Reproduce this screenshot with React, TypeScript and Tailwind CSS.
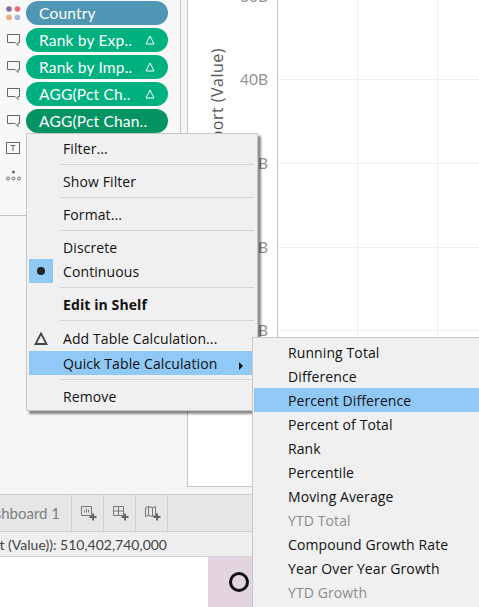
import React from "react";

const F = "[font-family:'Open_Sans',sans-serif]";

function Bubble() {
  return (
    <svg width="15" height="14" viewBox="0 0 15 14" fill="none" stroke="#666" strokeWidth="1">
      <path d="M1.500 1.500h12v8h-1.500v3l-3-3h-7.500z" />
    </svg>
  );
}

function Pill({ text, delta, dark, blue }: { text: string; delta?: boolean; dark?: boolean; blue?: boolean }) {
  const bg = blue ? "bg-[#4f96b4]" : dark ? "bg-[#049464]" : "bg-[#00b180]";
  return (
    <div className={`${bg} h-[24px] w-[142px] rounded-full flex items-center pl-[13px] pr-[13px] pt-px text-white text-[15.5px] justify-between tracking-[0.2px] [font-family:'Lato',sans-serif]`}>
      <span className="whitespace-nowrap">{text}</span>
      {delta && (
        <svg width="10" height="10" viewBox="0 0 10 10" fill="none" stroke="#fff" strokeWidth="1" className="-mt-px">
          <path d="M5 1L9 9H1z" />
        </svg>
      )}
    </div>
  );
}

function ShelfRow({ icon, children }: { icon: React.ReactNode; children?: React.ReactNode }) {
  return (
    <div className="h-[24px] flex items-center">
      <div className="w-[26px] flex items-center justify-center">{icon}</div>
      {children}
    </div>
  );
}

function Sep() {
  return <div className="h-px bg-[#d4d4d4] my-1 ml-[33px] mr-[3px]" />;
}

function Item({ children, bold, active, check, h }: { children: React.ReactNode; bold?: boolean; active?: boolean; check?: React.ReactNode; h?: string }) {
  return (
    <div className={`${h ?? "h-[24px]"} flex items-center mx-[2px] tracking-[0.1px] ${active ? "bg-[#90c8f6]" : ""} ${bold ? "font-bold" : ""}`}>
      <div className="w-[24px] h-[24px] flex items-center justify-center shrink-0">{check}</div>
      <span className="ml-[10px] whitespace-nowrap">{children}</span>
    </div>
  );
}

function SubItem({ children, active, off }: { children: React.ReactNode; active?: boolean; off?: boolean }) {
  return (
    <div className={`h-[24px] flex items-center pl-[34px] ml-px whitespace-nowrap tracking-[0.1px] ${active ? "bg-[#90c8f6]" : ""} ${off ? "text-[#8c8c8c]" : "text-[#111]"}`}>
      {children}
    </div>
  );
}

function TabIcon({ kind }: { kind: number }) {
  return (
    <div className="w-[32px] h-full border-r border-[#cfcfcf] flex items-center justify-center pl-[3px]">
      <svg width="18" height="18" viewBox="0 0 18 18" fill="none" stroke="#777" strokeWidth="1">
        {kind === 0 && <path d="M1.500 2.500h10v9h-10zM4.500 8.500v-2M6.500 8.500v-4M8.500 8.500v-3" />}
        {kind === 1 && <path d="M1.500 2.500h10v9h-10zM6.500 2.500v9M1.500 7h10" />}
        {kind === 2 && <path d="M1.500 3.500l3-1 4 1 3-1v9l-3 1-4-1-3 1zM4.500 2.500v9M8.500 3.500v9" />}
        <path d="M13 9.500v7M9.500 13h7" stroke="#666" strokeWidth="2" />
      </svg>
    </div>
  );
}

export default function App() {
  return (
    <div className={`relative w-[479px] h-[607px] overflow-hidden bg-[#f5f5f5] flex flex-col ${F}`}>
      <div className="flex h-[494px] shrink-0">
        <div className="w-[181px] shrink-0 border-r border-[#c4c4c4] bg-[#f8f8f8] h-[215px] flex flex-col pt-px gap-[3px]">
          <ShelfRow
            icon={
              <svg width="15" height="15" viewBox="0 0 15 15">
                <circle cx="3" cy="3" r="2.800" fill="#8a6d9c" />
                <circle cx="11.500" cy="3" r="2.800" fill="#ee6a72" />
                <circle cx="3" cy="11.500" r="2.800" fill="#f3a77c" />
                <circle cx="11.500" cy="11.500" r="2.800" fill="#a3b7d8" />
              </svg>
            }
          >
            <Pill text="Country" blue />
          </ShelfRow>
          <ShelfRow icon={<Bubble />}><Pill text="Rank by Exp.." delta /></ShelfRow>
          <ShelfRow icon={<Bubble />}><Pill text="Rank by Imp.." delta /></ShelfRow>
          <ShelfRow icon={<Bubble />}><Pill text="AGG(Pct Ch.." delta /></ShelfRow>
          <ShelfRow icon={<Bubble />}><Pill text="AGG(Pct Chan.." dark /></ShelfRow>
          <ShelfRow
            icon={
              <svg width="14" height="14" viewBox="0 0 14 14" fill="none" stroke="#666">
                <path d="M.5 1.500h13v11H.5z" />
                <path d="M4.500 4.500h5M7 4.500v5.500" />
              </svg>
            }
          />
          <ShelfRow
            icon={
              <svg width="15" height="11" viewBox="0 0 15 11" fill="none" stroke="#666">
                <circle cx="7.500" cy="2" r="1.500" fill="#666" stroke="none" />
                <circle cx="2" cy="8.500" r="1.500" />
                <circle cx="7.500" cy="8.500" r="1.500" />
                <circle cx="13" cy="8.500" r="1.500" />
              </svg>
            }
          />
          <div className="mt-auto h-px w-[26px] bg-[#c4c4c4] translate-y-px" />
        </div>
        <div className="flex-1 ml-[6px] h-[487px] bg-white border-l border-b border-[#c4c4c4]">
          <svg width="291" height="486" className="block">
            <g stroke="#efefef" fill="none">
              <path d="M89 79.500H291M89 163.500H291M89 247.500H291M89 330.500H291M169.500 0V486M249.500 0V486" />
            </g>
            <path d="M89.500 0V486" stroke="#c4c4c4" fill="none" />
            <g fill="#929292" fontSize="15.500" textAnchor="end" fontFamily="Lato, sans-serif">
              <text x="80" y="2">30B</text>
              <text x="80" y="85">40B</text>
              <text x="80" y="169">20B</text>
              <text x="80" y="253">10B</text>
              <text x="80" y="336">0B</text>
            </g>
            <text transform="translate(35 48) rotate(-90)" fill="#555" fontSize="16" letterSpacing="0.5" textAnchor="end" fontFamily="'Open Sans', sans-serif">Export (Value)</text>
          </svg>
        </div>
      </div>

      <div className="h-[38px] shrink-0 bg-[#e6e6e6] border-t border-b border-[#cfcfcf] flex items-center [font-family:'Lato',sans-serif]">
        <div className="w-[72px] h-full border-r border-[#cfcfcf] overflow-hidden flex items-center justify-end pr-[11px] text-[15px] text-[#808080] whitespace-nowrap">Dashboard 1</div>
        <TabIcon kind={0} />
        <TabIcon kind={1} />
        <TabIcon kind={2} />
      </div>

      <div className="h-[25px] shrink-0 bg-[#efefef] border-b border-[#d4d4d4] w-[252px] flex items-center justify-end pr-[85px] overflow-hidden text-[14px] text-[#444] whitespace-nowrap [font-family:'Lato',sans-serif]">
        SUM(Export (Value)): 510,402,740,000
      </div>

      <div className="flex-1 flex">
        <div className="w-[208px] bg-white" />
        <div className="w-[271px] bg-[#e3d5e0] pl-[21px] flex items-center">
          <div className="w-[20px] h-[20px] rounded-full border-[3px] border-[#111] bg-transparent" />
        </div>
      </div>

      <div className="absolute left-[26px] top-[133px] w-[232px] h-[278px] bg-[#f0f0f0] border border-[#c8c8c8] shadow-[3px_3px_2px_rgba(0,0,0,0.45)] pt-[2px] text-[14px] text-[#111]">
        <Item>Filter...</Item>
        <Sep />
        <Item>Show Filter</Item>
        <Sep />
        <Item>Format...</Item>
        <Sep />
        <Item>Discrete</Item>
        <Item check={<div className="w-[24px] h-[24px] bg-[#90c8f6] flex items-center justify-center"><div className="w-[8px] h-[8px] rounded-full bg-[#222]" /></div>}>Continuous</Item>
        <Sep />
        <Item bold>Edit in Shelf</Item>
        <Sep />
        <Item h="h-[26px]" check={<svg width="14" height="13" viewBox="0 0 14 13" fill="none" stroke="#444" strokeWidth="1.800"><path d="M7 1.500L12.500 12H1.500z" /></svg>}>Add Table Calculation...</Item>
        <Item active>
          Quick Table Calculation
        </Item>
        <Sep />
        <Item>Remove</Item>
        <div className="absolute left-[212px] top-[228px] w-0 h-0 border-y-[4px] border-y-transparent border-l-[4px] border-l-[#111]" />
      </div>

      <div className="absolute left-[252px] top-[337px] w-[240px] h-[280px] bg-[#f0f0f0] border border-[#c8c8c8] pt-[2px] text-[14px]">
        <SubItem>Running Total</SubItem>
        <SubItem>Difference</SubItem>
        <SubItem active>Percent Difference</SubItem>
        <SubItem>Percent of Total</SubItem>
        <SubItem>Rank</SubItem>
        <SubItem>Percentile</SubItem>
        <SubItem>Moving Average</SubItem>
        <SubItem off>YTD Total</SubItem>
        <SubItem>Compound Growth Rate</SubItem>
        <SubItem>Year Over Year Growth</SubItem>
        <SubItem off>YTD Growth</SubItem>
      </div>
    </div>
  );
}
